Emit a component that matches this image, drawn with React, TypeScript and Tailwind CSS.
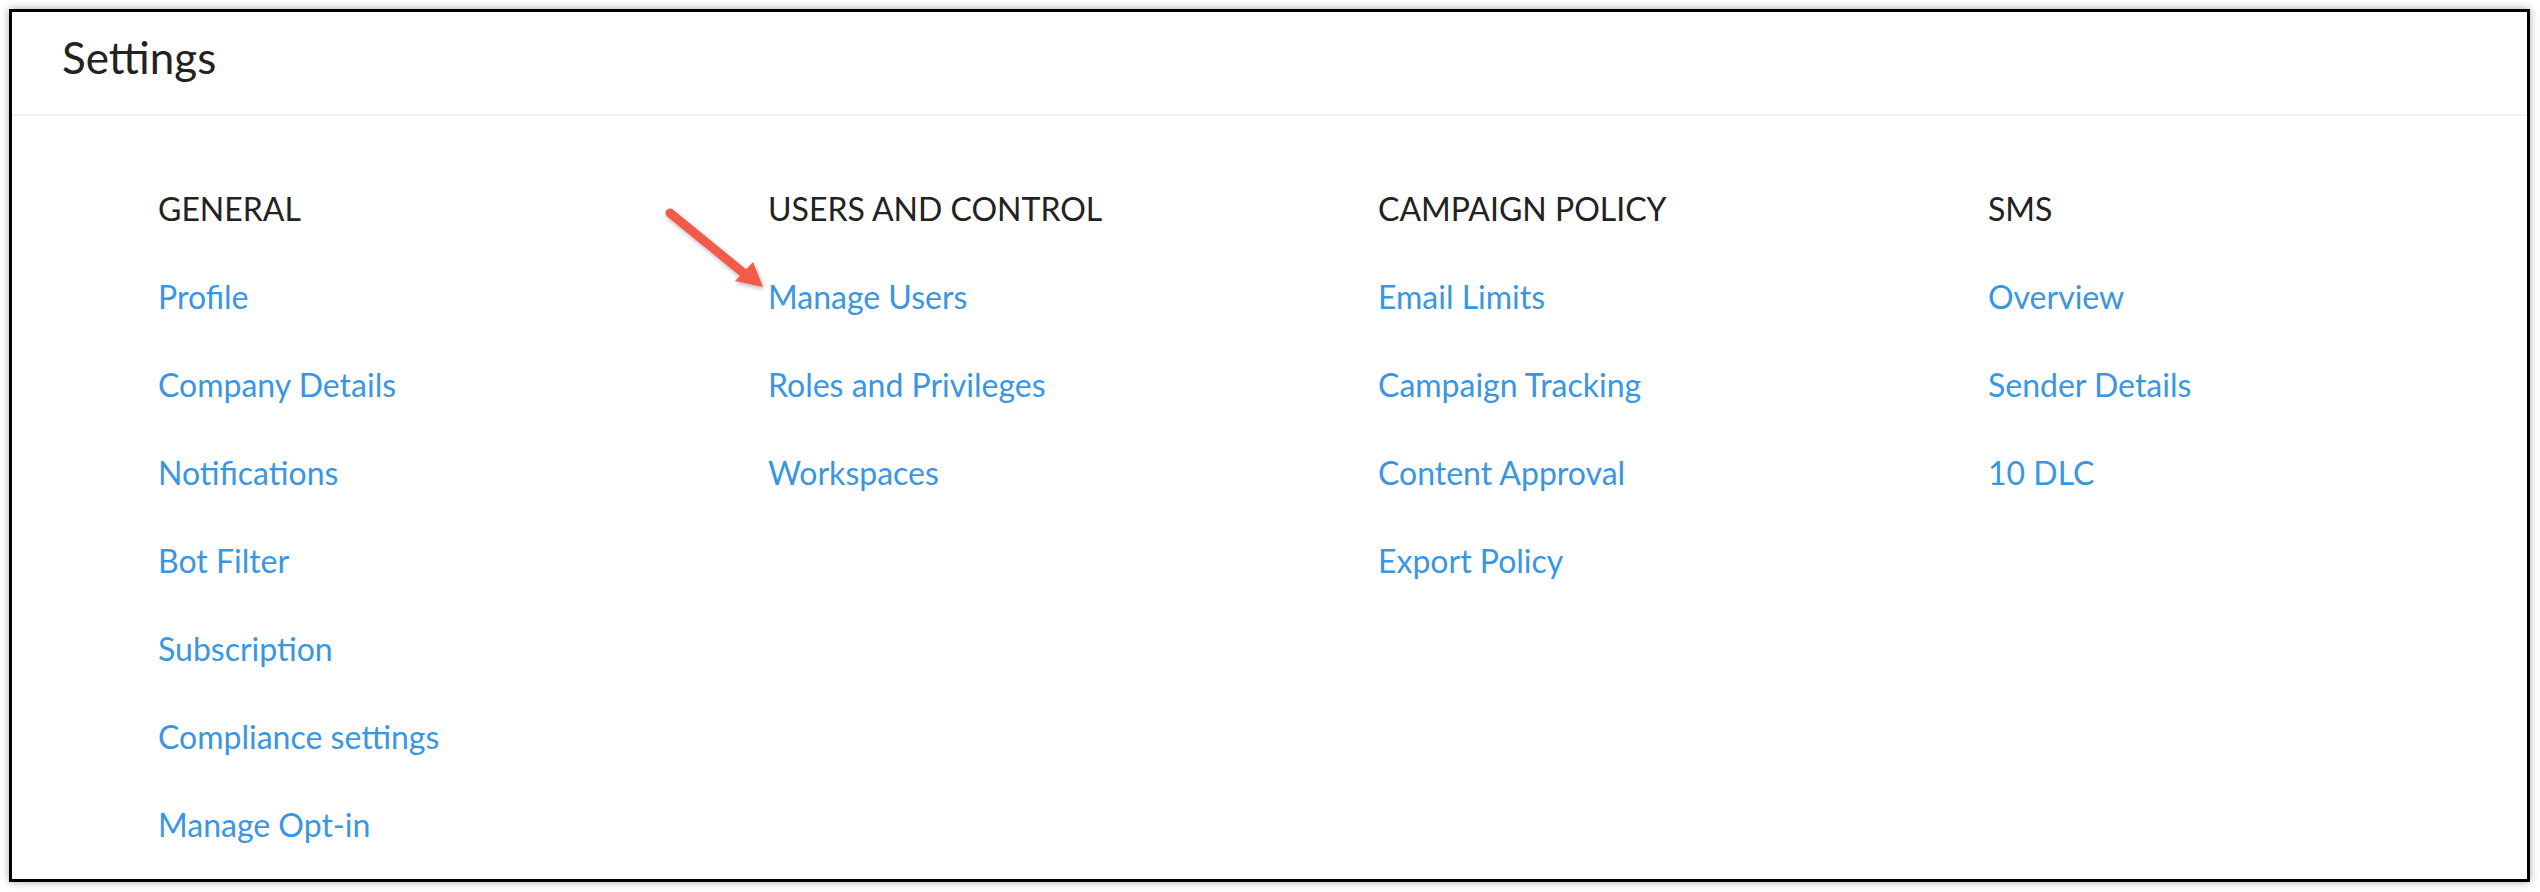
const sections = [
  {
    title: "GENERAL",
    links: ["Profile", "Company Details", "Notifications", "Bot Filter", "Subscription", "Compliance settings", "Manage Opt-in"],
  },
  { title: "USERS AND CONTROL", links: ["Manage Users", "Roles and Privileges", "Workspaces"] },
  { title: "CAMPAIGN POLICY", links: ["Email Limits", "Campaign Tracking", "Content Approval", "Export Policy"] },
  { title: "SMS", links: ["Overview", "Sender Details", "10 DLC"] },
];

function Arrow() {
  return (
    <svg className="absolute left-[638px] top-[183px]" width="130" height="110" viewBox="0 0 130 110">
      <defs>
        <filter id="sh" x="-20%" y="-20%" width="140%" height="140%">
          <feDropShadow dx="1" dy="2" stdDeviation="2" floodColor="#000" floodOpacity="0.3" />
        </filter>
      </defs>
      <g filter="url(#sh)">
        <line x1="20" y1="18" x2="96" y2="80" stroke="#f25a4a" strokeWidth="9" strokeLinecap="round" />
        <polygon points="113,92 85,86 103,67" fill="#f25a4a" />
      </g>
    </svg>
  );
}

export default function App() {
  return (
    <div className="h-[892px] w-full bg-white pl-[9px] pt-[9px] font-['Lato','Liberation_Sans',sans-serif]">
      <div className="relative h-[873px] w-[2521px] border-[3px] border-black bg-white shadow-[0_0_8px_rgba(0,0,0,0.35)]">
        <div className="h-[104px] border-b-2 border-[#f1f2f5] pl-[50px] pt-[20px]">
          <h1 className="text-[44px] leading-[50px] text-[#222]">Settings</h1>
        </div>
        <div className="grid grid-cols-[610px_610px_610px_610px] pl-[146px] pt-[74px]">
          {sections.map((s) => (
            <div key={s.title} className="flex flex-col gap-[50px]">
              <h2 className="text-[32px] leading-[38px] text-[#222]">{s.title}</h2>
              {s.links.map((l) => (
                <a key={l} href="#" className="text-[32px] leading-[38px] text-[#3a96e0]">
                  {l}
                </a>
              ))}
            </div>
          ))}
        </div>
        <Arrow />
      </div>
    </div>
  );
}
